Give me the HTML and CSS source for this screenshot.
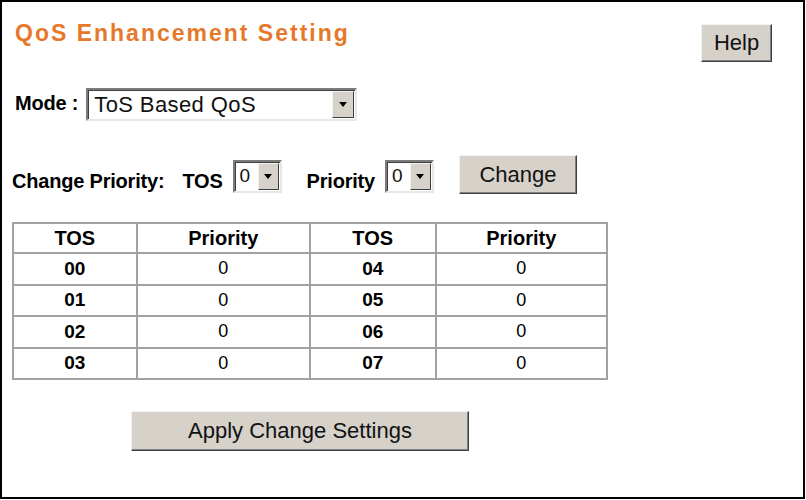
FILE: index.html
```html
<!DOCTYPE html>
<html lang="en">

<head>
    <meta charset="UTF-8">
    <title>QoS Enhancement Setting</title>
    <link rel="stylesheet" href="styles.css">
</head>

<body>
    <div class="frame">
        <div class="header">
            <h1 class="title">QoS Enhancement Setting</h1>
            <button class="btn btn-help">Help</button>
        </div>

        <div class="mode-row">
            <span class="label">Mode :</span>
            <div class="select select-mode">
                <span class="select-value">ToS Based QoS</span>
                <span class="select-arrow"></span>
            </div>
        </div>

        <div class="priority-row">
            <span class="label">Change Priority:</span>
            <span class="label label-tos">TOS</span>
            <div class="select select-small">
                <span class="select-value">0</span>
                <span class="select-arrow"></span>
            </div>
            <span class="label label-prio">Priority</span>
            <div class="select select-small">
                <span class="select-value">0</span>
                <span class="select-arrow"></span>
            </div>
            <button class="btn btn-change">Change</button>
        </div>

        <table class="tos-table">
            <tr class="head">
                <th class="c1">TOS</th>
                <th class="c2">Priority</th>
                <th class="c3">TOS</th>
                <th class="c4">Priority</th>
            </tr>
            <tr>
                <td class="tos">00</td>
                <td>0</td>
                <td class="tos">04</td>
                <td>0</td>
            </tr>
            <tr>
                <td class="tos">01</td>
                <td>0</td>
                <td class="tos">05</td>
                <td>0</td>
            </tr>
            <tr>
                <td class="tos">02</td>
                <td>0</td>
                <td class="tos">06</td>
                <td>0</td>
            </tr>
            <tr>
                <td class="tos">03</td>
                <td>0</td>
                <td class="tos">07</td>
                <td>0</td>
            </tr>
        </table>

        <div class="apply-row">
            <button class="btn btn-apply">Apply Change Settings</button>
        </div>
    </div>
</body>

</html>
```

FILE: styles.css
```css
* {
    margin: 0;
    padding: 0;
    box-sizing: border-box;
}

body {
    font-family: 'Liberation Sans', Arial, sans-serif;
    background: #fff;
    color: #000;
}

.frame {
    width: 805px;
    height: 499px;
    border: 2px solid #000;
    padding: 0 0 0 10px;
}

.header {
    display: flex;
    justify-content: space-between;
    align-items: flex-start;
    padding: 18px 31px 0 3px;
}

.title {
    font-size: 23px;
    font-weight: bold;
    color: #e6782a;
    letter-spacing: 2px;
    line-height: 26px;
}

.btn {
    font-family: 'Liberation Sans', Arial, sans-serif;
    background: #d6d2ca;
    color: #111;
    border: 1px solid;
    border-color: #f4f3f0 #404040 #404040 #f4f3f0;
    box-shadow: inset -1px -1px 0 #808080;
    font-size: 22px;
    cursor: pointer;
}

.btn-help {
    width: 71px;
    height: 38px;
    margin-top: 4px;
}

.mode-row {
    display: flex;
    align-items: center;
    margin-top: 26px;
    padding-left: 3px;
}

.mode-row .label {
    margin-top: -3px;
}

.label {
    font-weight: bold;
    font-size: 20px;
    letter-spacing: -0.2px;
    line-height: 24px;
}

.select {
    display: flex;
    align-items: stretch;
    background: #fff;
    border: 2px solid;
    border-color: #7b7b7b #e8e8e8 #e8e8e8 #7b7b7b;
    box-shadow: inset 1px 1px 0 #404040;
}

.select-value {
    flex: 1;
    display: flex;
    align-items: center;
    padding-left: 6px;
    font-size: 22px;
    letter-spacing: 0.4px;
    color: #111;
}

.select-arrow {
    width: 22px;
    margin: 1px 1px 1px 0;
    background: #d6d2ca;
    border: 1px solid;
    border-color: #f4f3f0 #404040 #404040 #f4f3f0;
    display: flex;
    align-items: center;
    justify-content: center;
}

.select-arrow::before {
    content: '';
    border-left: 4px solid transparent;
    border-right: 4px solid transparent;
    border-top: 5px solid #000;
}

.select-mode {
    width: 271px;
    height: 33px;
    margin-left: 8px;
}

.priority-row {
    display: flex;
    align-items: center;
    margin-top: 34px;
}

.priority-row .label {
    align-self: flex-end;
    margin-bottom: 1px;
}

.label-tos {
    margin-left: 18px;
}

.select-small {
    width: 49px;
    height: 33px;
    margin-left: 10px;
    margin-top: 3px;
}

.select-small .select-value {
    padding-left: 5px;
    font-size: 19px;
    letter-spacing: 0;
}

.select-small .select-arrow {
    width: 21px;
}

.label-prio {
    margin-left: 25px;
}

.btn-change {
    width: 118px;
    height: 39px;
    margin-left: 25px;
}

.tos-table {
    margin-top: 28px;
    border: 1px solid #a2a2a2;
    border-spacing: 0;
    width: 596px;
}

.tos-table th,
.tos-table td {
    border: 1px solid #a2a2a2;
    text-align: center;
    height: 31.5px;
}

.tos-table th {
    height: 30px;
    font-size: 20px;
}

.tos-table td {
    font-size: 18px;
}

.tos-table td.tos {
    font-weight: bold;
    font-size: 19px;
}

.c1 {
    width: 124px;
}

.c2 {
    width: 174px;
}

.c3 {
    width: 126px;
}

.c4 {
    width: 172px;
}

.apply-row {
    padding-left: 119px;
    margin-top: 31px;
}

.btn-apply {
    width: 338px;
    height: 40px;
}
```
